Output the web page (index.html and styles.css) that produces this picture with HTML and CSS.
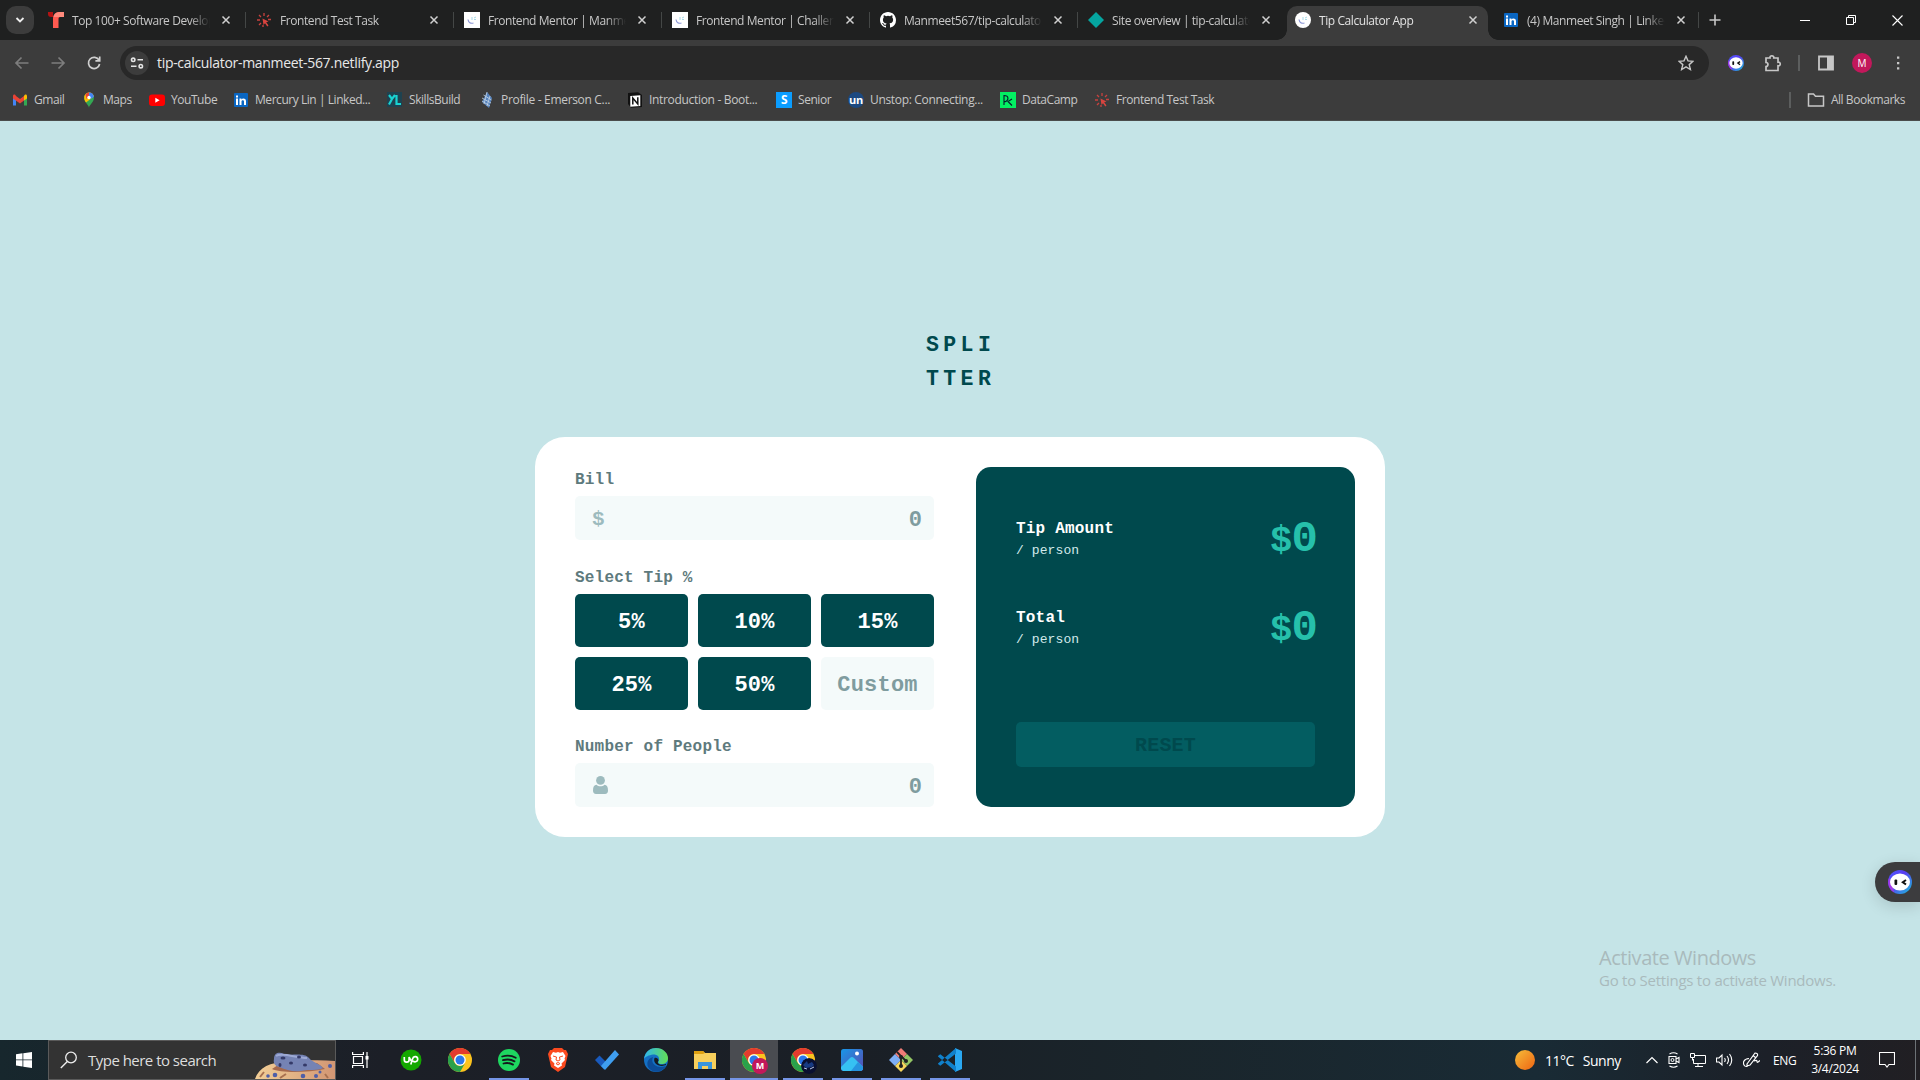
FILE: index.html
```html
<!DOCTYPE html>
<html lang="en">
<head>
<meta charset="utf-8">
<title>Tip Calculator App</title>
<link rel="stylesheet" href="styles.css">
</head>
<body>
<svg class="defs" width="0" height="0">
  <defs>
    <linearGradient id="ring" x1="0" y1="0" x2="1" y2="1"><stop offset="0" stop-color="#4b5cff"/><stop offset=".4" stop-color="#5a3df2"/><stop offset="1" stop-color="#18c4dc"/></linearGradient>
    <linearGradient id="sun" x1="0" y1="0" x2="1" y2="1"><stop offset="0" stop-color="#f6bd3a"/><stop offset="1" stop-color="#ee6412"/></linearGradient>
    <linearGradient id="edgeA" x1="0" y1="0" x2="1" y2="0"><stop offset="0" stop-color="#2fb6ee"/><stop offset="1" stop-color="#63de54"/></linearGradient>
    <linearGradient id="photo" x1="0" y1="0" x2="1" y2="1"><stop offset="0" stop-color="#1797e8"/><stop offset="1" stop-color="#5b4bb0"/></linearGradient>
    <linearGradient id="dough" x1="0" y1="0" x2="1" y2="0"><stop offset="0" stop-color="#f2cf97"/><stop offset="1" stop-color="#d29673"/></linearGradient>
    <symbol id="close" viewBox="0 0 16 16"><path d="M4.500 4.500l7 7M11.500 4.500l-7 7" stroke="currentColor" stroke-width="1.500" fill="none"/></symbol>
    <symbol id="burst" viewBox="0 0 16 16"><path d="M8 1v3M3 3l2 2M13 3l-2 2M1 8h3M12 7.500h3M3 13l2-2M7 13v2" stroke="#c9413e" stroke-width="1.300" fill="none"/><path d="M6.500 6.500l6 3-2.300.8 2.300 3.200-1.200.9-2.300-3.200-1.500 1.800z" fill="#d9443f"/></symbol>
    <symbol id="fm" viewBox="0 0 16 16"><path d="M4 7.500c.5 3 2.500 4.300 5.500 3.500" stroke="#8d97d6" stroke-width="1.200" fill="none"/><path d="M8 5v3M10 6l2-1M10 7.500h2" stroke="#a9dbe8" stroke-width="1" fill="none"/></symbol>
    <symbol id="linkedin" viewBox="0 0 16 16"><rect x="1" y="1" width="14" height="14" rx="1" fill="#0a66c2"/><path d="M3 6.500h2V13H3zM3 3.500h2v2H3zM6.500 6.500h1.900v.9c1-1.500 4.600-1.400 4.600 1.700V13h-2V9.600c0-1.900-2.500-1.800-2.500 0V13h-2z" fill="#fff"/></symbol>
    <symbol id="bot" viewBox="0 0 24 24"><circle cx="12" cy="12" r="12" fill="url(#ring)"/><path d="M1 8A12 12 0 0 0 6 22.500L4 12z" fill="#a238e8"/><ellipse cx="12" cy="12" rx="10" ry="8.600" fill="#fff"/><rect x="6.500" y="9.500" width="2.700" height="5.500" rx="1" fill="#111"/><path d="M18 10l-3.200 2.200L18 14.500" stroke="#111" stroke-width="2" fill="none"/></symbol>
    <symbol id="chrome" viewBox="0 0 24 24"><circle cx="12" cy="12" r="12" fill="#fcc31e"/><path d="M1.600 6A12 12 0 0 1 22.400 6H12a6 6 0 0 0-5.200 9z" fill="#e33b2e"/><path d="M1.600 6A12 12 0 0 0 12 24l5.200-9A6 6 0 0 1 6.800 15z" fill="#2aa14b"/><circle cx="12" cy="12" r="5.800" fill="#fff"/><circle cx="12" cy="12" r="4.500" fill="#2b78ea"/></symbol>
  </defs>
</svg>

<div class="browser">
  <div class="tabs">
    <div class="tab-search"><svg width="12" height="12" viewBox="0 0 12 12"><path d="M2.500 4L6 7.500 9.500 4" stroke="#eee" stroke-width="1.800" fill="none"/></svg></div>
    <div class="tab"><svg class="ico" viewBox="0 0 16 16"><path d="M0 0h5v5H3a3 3 0 0 1-3-3z" fill="#b31313"/><path d="M5 6a6 6 0 0 1 6-6h5v5h-4q-1.500 0-1.500 1.500V16H5z" fill="#ff5a50"/><path d="M5.500 5a6 6 0 0 1 5.500-5h5v5z" fill="#ff8a7c"/></svg><span class="title">Top 100+ Software Developer</span><svg class="x"><use href="#close"/></svg></div>
    <div class="tab"><svg class="ico"><use href="#burst"/></svg><span class="title">Frontend Test Task</span><svg class="x"><use href="#close"/></svg></div>
    <div class="tab"><svg class="ico white"><use href="#fm"/></svg><span class="title">Frontend Mentor | Manmeet</span><svg class="x"><use href="#close"/></svg></div>
    <div class="tab"><svg class="ico white"><use href="#fm"/></svg><span class="title">Frontend Mentor | Challenges</span><svg class="x"><use href="#close"/></svg></div>
    <div class="tab"><svg class="ico" viewBox="0 0 16 16"><path fill="#fff" d="M8 0C3.580 0 0 3.580 0 8c0 3.540 2.290 6.530 5.470 7.590.4.070.55-.17.55-.38 0-.19-.01-.82-.01-1.490-2.010.37-2.530-.49-2.690-.94-.09-.23-.48-.94-.82-1.130-.28-.15-.68-.52-.01-.53.63-.01 1.080.58 1.230.82.72 1.210 1.870.87 2.330.66.07-.52.28-.87.51-1.070-1.780-.2-3.640-.89-3.640-3.950 0-.87.31-1.590.82-2.150-.08-.2-.36-1.020.08-2.120 0 0 .67-.21 2.200.82a7.600 7.600 0 0 1 4 0c1.530-1.040 2.200-.82 2.200-.82.44 1.100.16 1.920.08 2.120.51.56.82 1.270.82 2.150 0 3.070-1.870 3.750-3.650 3.950.29.25.54.73.54 1.480 0 1.070-.01 1.930-.01 2.200 0 .21.15.46.55.38A8 8 0 0 0 16 8c0-4.420-3.580-8-8-8z"/></svg><span class="title">Manmeet567/tip-calculator</span><svg class="x"><use href="#close"/></svg></div>
    <div class="tab last-before"><svg class="ico" viewBox="0 0 16 16"><path d="M8 0l8 8-8 8-8-8z" fill="#05a5a0"/></svg><span class="title">Site overview | tip-calculator</span><svg class="x"><use href="#close"/></svg></div>
    <div class="tab active"><svg class="ico white round"><use href="#fm"/></svg><span class="title">Tip Calculator App</span><svg class="x"><use href="#close"/></svg></div>
    <div class="tab after"><svg class="ico"><use href="#linkedin"/></svg><span class="title">(4) Manmeet Singh | LinkedIn</span><svg class="x"><use href="#close"/></svg></div>
    <svg class="plus" width="12" height="12" viewBox="0 0 12 12"><path d="M6 .5v11M.5 6h11" stroke="#c7c7c7" stroke-width="1.600"/></svg>
    <div class="win">
      <svg width="10" height="10"><path d="M0 5.500h10" stroke="#fff"/></svg>
      <svg width="10" height="10"><path d="M.5 2.500h7v7h-7zM2.500 2.500v-2h7v7h-2" stroke="#fff" fill="none"/></svg>
      <svg width="11" height="11"><path d="M.5.5l10 10M10.500.5l-10 10" stroke="#fff" stroke-width="1.100"/></svg>
    </div>
  </div>

  <div class="toolbar">
    <svg class="nav dim" viewBox="0 0 16 16"><path d="M14.500 8H2.500M7.500 2.500L2 8l5.500 5.500"/></svg>
    <svg class="nav dim" viewBox="0 0 16 16"><path d="M1.500 8h12M8.500 2.500L14 8l-5.500 5.500"/></svg>
    <svg class="nav" viewBox="0 0 16 16"><path d="M13 5.200A5.600 5.600 0 1 0 13.600 9M13.700 1.500v4.300H9.400"/></svg>
    <div class="omnibox">
      <span class="site"><svg width="14" height="12" viewBox="0 0 14 12"><g stroke="#e3e3e3" stroke-width="1.600" fill="none"><circle cx="3.200" cy="2.800" r="1.700"/><path d="M7.500 2.800H13M1 9.200h5.500"/><circle cx="10.800" cy="9.200" r="1.700"/></g></svg></span>
      <span class="url">tip-calculator-manmeet-567.netlify.app</span>
      <svg class="star" width="16" height="16" viewBox="0 0 16 16"><path d="M8 1.300l2 4.600 5 .4-3.800 3.300 1.200 4.900L8 11.900l-4.400 2.600 1.200-4.900L1 6.300l5-.4z" stroke="#c7c7c7" stroke-width="1.400" fill="none"/></svg>
    </div>
    <svg class="i16" viewBox="0 0 24 24"><use href="#bot"/></svg>
    <svg class="i18" viewBox="0 0 18 18"><path d="M2 4h4c-.6-3 4.300-3 3.800 0H14v4.200c3-.5 3 4 0 3.600V16.500H2v-4c2.600 0 2.600-4 0-4z" stroke="#c7c7c7" stroke-width="1.700" fill="none"/></svg>
    <i class="vsep"></i>
    <svg class="i16" viewBox="0 0 16 16"><path d="M1 1.500h14v13H1z" stroke="#c7c7c7" stroke-width="1.800" fill="none"/><path d="M9 1.500h6v13H9z" fill="#c7c7c7"/></svg>
    <span class="avatar">M</span>
    <svg class="i16" viewBox="0 0 16 16"><path d="M7 1.500h2.300v2.300H7zM7 6.900h2.300v2.300H7zM7 12.300h2.300v2.300H7z" fill="#c7c7c7"/></svg>
  </div>

  <div class="bookmarks">
    <div class="bm"><svg viewBox="0 0 16 16"><path d="M1 3.500v10h3V8z" fill="#4285f4"/><path d="M15 3.500v10h-3V8z" fill="#34a853"/><path d="M12 4v4.500l3-2V4.200c0-1.700-1.800-2.400-3-.2z" fill="#fbbc04"/><path d="M1 4.200v2.300l7 5 4-3V4L8 7 4 4C2.800 1.800 1 2.500 1 4.200z" fill="#ea4335"/></svg><span>Gmail</span></div>
    <div class="bm"><svg viewBox="0 0 16 16"><path d="M8 16c0-3-4.800-5.500-4.800-10.200A4.900 4.900 0 0 1 8 .5a4.900 4.900 0 0 1 4.900 5.300C12.900 10.500 8 13 8 16z" fill="#34a853"/><path d="M3.200 6A4.900 4.900 0 0 1 8 .5c3 0 4.600 2 4.800 4L5 10.500C4 9 3.200 7.800 3.200 6z" fill="#fbbc04"/><path d="M4.500 2.200A5 5 0 0 1 11 1.500L5.500 7z" fill="#ea4335"/><path d="M8 .5c3 0 4.800 2 4.900 4.500L9.500 7 8 5z" fill="#4285f4"/><circle cx="8" cy="5.500" r="1.700" fill="#fff"/></svg><span>Maps</span></div>
    <div class="bm"><svg viewBox="0 0 16 16"><rect y="2.500" width="16" height="11.500" rx="3" fill="#f00"/><path d="M6.300 5.700v5l4.300-2.500z" fill="#fff"/></svg><span>YouTube</span></div>
    <div class="bm"><svg viewBox="0 0 16 16"><use href="#linkedin"/></svg><span>Mercury Lin | Linked...</span></div>
    <div class="bm"><svg viewBox="0 0 16 16"><rect y="0" width="15" height="15" fill="#1e4250"/><path d="M2 3l3 4 3-4M5 7l-3 5.500M9.500 3v9H14" stroke="#19d3d2" stroke-width="2.200" fill="none"/></svg><span>SkillsBuild</span></div>
    <div class="bm wide"><svg viewBox="0 0 16 16"><path d="M8 0l5 6-3 10-7-6z" fill="#5683bd"/><path d="M3 6l9 5M4.500 3l8 5M3 9l8 5M8 0L5 12M11 4L8 14" stroke="#c7d5e4" stroke-width=".8"/></svg><span>Profile - Emerson C...</span></div>
    <div class="bm wide"><svg viewBox="0 0 16 16"><path d="M1 1l10-.8L15 3v12l-11 .8L1 12z" fill="#111"/><path d="M3.300 4l10-.7v10.800l-10 .6z" fill="#fff"/><path d="M5.800 12.500V6l5 6V5.200" stroke="#111" stroke-width="1.500" fill="none"/></svg><span>Introduction - Boot...</span></div>
    <div class="bm"><b class="sq blue">S</b><span>Senior</span></div>
    <div class="bm wide"><b class="sq navy">un</b><span>Unstop: Connecting...</span></div>
    <div class="bm"><svg viewBox="0 0 16 16"><rect width="16" height="16" fill="#03ef62"/><path d="M4 13V3.500c5 0 5.500 5 0 6.500M12 7L8 9.500l4 4" stroke="#05192d" stroke-width="1.100" fill="none"/></svg><span>DataCamp</span></div>
    <div class="bm"><svg viewBox="0 0 16 16"><use href="#burst"/></svg><span>Frontend Test Task</span></div>
    <div class="all"><svg width="18" height="16" viewBox="0 0 18 16"><path d="M1.500 2h5l2 2.300h8V14h-15z" stroke="#c7c7c7" stroke-width="1.500" fill="none"/></svg><span>All Bookmarks</span></div>
  </div>
</div>

<main class="page">
  <h1 class="logo">SPLI<br>TTER</h1>
  <section class="card">
    <form class="form">
      <label class="label">Bill</label>
      <div class="field"><span class="dollar">$</span><span>0</span></div>
      <label class="label tip">Select Tip %</label>
      <div class="grid">
        <div class="btn">5%</div><div class="btn">10%</div><div class="btn">15%</div>
        <div class="btn">25%</div><div class="btn">50%</div><div class="btn custom">Custom</div>
      </div>
      <label class="label people">Number of People</label>
      <div class="field"><svg class="person" width="15" height="18" viewBox="0 0 15 18"><circle cx="7.500" cy="4.400" r="4.400" fill="#9dbbbe"/><path d="M3.500 8.800c2 2 6 2 8 0 2.300 0 3.500 2.200 3.500 5.700 0 2-1 3.500-3 3.500H3c-2 0-3-1.500-3-3.500 0-3.500 1.200-5.700 3.500-5.700z" fill="#9dbbbe"/></svg><span>0</span></div>
    </form>
    <div class="panel">
      <div class="row"><div><div class="name">Tip Amount</div><div class="per">/ person</div></div><div class="amount"><i>$</i>0</div></div>
      <div class="row"><div><div class="name">Total</div><div class="per">/ person</div></div><div class="amount"><i>$</i>0</div></div>
      <div class="reset">RESET</div>
    </div>
  </section>
  <div class="float"><svg width="24" height="24"><use href="#bot"/></svg></div>
  <div class="activate"><div class="a1">Activate Windows</div><div class="a2">Go to Settings to activate Windows.</div></div>
</main>

<footer class="taskbar">
  <div class="start"><svg width="16" height="16" viewBox="0 0 16 16"><path d="M0 2.200l6.500-.9v6.200H0zM7.300 1.200L16 0v7.500H7.300zM0 8.300h6.500v6.200L0 13.600zM7.300 8.300H16V16l-8.700-1.300z" fill="#fff"/></svg></div>
  <div class="search">
    <svg width="18" height="18" viewBox="0 0 18 18"><circle cx="11" cy="6.500" r="5.300" stroke="#eee" stroke-width="1.300" fill="none"/><path d="M7.300 10.500L.8 17" stroke="#eee" stroke-width="1.400"/></svg>
    <span>Type here to search</span>
    <svg class="cookie" width="80" height="38" viewBox="0 0 80 38"><path d="M0 38C4 25 18 20 36 21c15-2 30-2 44-1v18z" fill="url(#dough)"/><path d="M17 28c8 4 35 4 53 0l-8-6H26z" fill="#a5694e"/><path d="M19 18c0-7 6-7 10-5 8 2 20-2 25 4 4 5 12 6 14 10-6 3-13 1-22 3-9 1-14-1-22-4-4-1-6-4-5-8z" fill="#7583b4"/><path d="M21 15c6-4 20 2 31 2" stroke="#9da9d4" stroke-width="2" fill="none"/><g fill="#343a68"><ellipse cx="28" cy="17" rx="2.500" ry="1.500"/><ellipse cx="36" cy="22" rx="2" ry="1.500"/><ellipse cx="44" cy="16" rx="2" ry="1.500"/><ellipse cx="50" cy="24" rx="2" ry="1.500"/><ellipse cx="25" cy="24" rx="1.500" ry="2"/></g><g fill="#4e5fa8"><circle cx="13" cy="35" r="1.800"/><circle cx="20" cy="34" r="2.300"/><circle cx="48" cy="35" r="2.300"/><circle cx="61" cy="35" r="2"/><circle cx="65" cy="31" r="1.500"/><circle cx="75" cy="25" r="2"/></g><path d="M5 36l4-5M25 37l6-4M70 33l3 4" stroke="#a87150" stroke-width="2"/></svg>
  </div>
  <div class="apps">
    <div class="app view"><svg width="17" height="16" viewBox="0 0 17 16"><path d="M.6 0v2.500h10.800V0M.6 16v-2.500h10.800V16M1.500 4.500h9v7h-9z" stroke="#fff" stroke-width="1.200" fill="none"/><path d="M15 0v16" stroke="#fff" stroke-width="1.200"/><path d="M13.500 4h3v3.500h-3z" fill="#fff"/></svg></div>
    <div class="app"><svg width="22" height="22" viewBox="0 0 22 22"><circle cx="11" cy="11" r="10.500" fill="#14a800"/><path d="M4.300 8v2.700c0 3.300 4.800 3.300 4.800 0V8c1 2.500 2 4 3.400 4.700M10.800 15.500l1.700-5.600c1-3.500 5.200-2.500 5.200.3 0 2.300-2.600 3.400-4.800 1.800" stroke="#fff" stroke-width="1.700" fill="none"/></svg></div>
    <div class="app"><svg width="24" height="24"><use href="#chrome"/></svg></div>
    <div class="app run"><svg width="22" height="22" viewBox="0 0 22 22"><circle cx="11" cy="11" r="11" fill="#1ed760"/><path d="M4.200 7.500c5-1.400 9.500-1 13.500 1.200M5 11.200c4-1.200 8-.8 11.500 1.200M5.500 14.500c3.500-1 6.500-.6 9.500 1.100" stroke="#15181c" stroke-width="1.800" stroke-linecap="round" fill="none"/></svg></div>
    <div class="app"><svg width="20" height="24" viewBox="0 0 20 24"><path d="M6 0h8l2 2h2l2 4-3 13-7 5-7-5L0 6l2-4h2z" fill="#fb4a1f"/><path d="M5 4l3 .8L10 4l2 .8 3-.8 2.500 4-1 2.500.5 1.500-3.500 3.500.5 2L10 20l-4-2.500.5-2L3 12l.5-1.500-1-2.500z" fill="#fff"/><path d="M5 8l3.500 1L8 12l2 1 2-1-.5-3L15 8M8 15.500l2-1 2 1-2 1.500z" stroke="#fb4a1f" stroke-width="1" fill="none"/></svg></div>
    <div class="app"><svg width="24" height="20" viewBox="0 0 24 20"><path d="M0 10l4.500-4.500 8 8L9 19.500z" fill="#195abd"/><path d="M6 16L20 0l4 4.500L10 20z" fill="#3f9ef0"/></svg></div>
    <div class="app"><svg width="24" height="24" viewBox="0 0 24 24"><circle cx="12" cy="12" r="12" fill="#1470c4"/><path d="M0 11C1 3 7 0 12 0c7 0 12 5 12 10 0 4-3 6-6.500 6-3 0-4-1.500-2.500-3.500C16 8 12 6 9 6.500 5 7 1 9 0 11z" fill="url(#edgeA)"/><path d="M9 9c-3 7 4 12 13 9-4 7-14 8-18 1-2-5 1-9 5-10z" fill="#0c4c98"/><path d="M10.500 10c-1.500 4 2 8 7.500 8l4-1v-1c-5 2-10 0-7.500-3.500 0-2-2.500-3.500-4-2.500z" fill="#151b21"/></svg></div>
    <div class="app run"><svg width="22" height="18" viewBox="0 0 22 18"><path d="M0 0h9l2 2h11v16H0z" fill="#f8cf5c"/><path d="M0 0h9l2 2-2 1H0z" fill="#dfa011"/><path d="M4 18v-7h14v7h-4v-3H8v3z" fill="#3a94dc"/></svg></div>
    <div class="app run on"><svg width="24" height="24"><use href="#chrome"/></svg><b class="badge">M</b></div>
    <div class="app run"><svg width="24" height="24"><use href="#chrome"/></svg><svg class="badge night" viewBox="0 0 16 16"><circle cx="8" cy="8" r="8" fill="#0a1030"/><path d="M2 7l4-4 1 3 4-2 2 3-2 2-6 1z" fill="#183b83"/><path d="M3 10l3 1M9 11l4-2" stroke="#b7c7ee"/></svg></div>
    <div class="app run"><svg width="22" height="22" viewBox="0 0 22 22"><rect width="22" height="22" rx="2.500" fill="url(#photo)"/><path d="M0 18L9 9q2-2 4 0l9 9v2l-2 2H2l-2-2z" fill="#36c1f2"/><path d="M10 22l7-9 5 5v2l-2 2z" fill="#2694df"/><circle cx="16" cy="4.500" r="2" fill="#fff"/></svg></div>
    <div class="app run"><svg width="24" height="24" viewBox="0 0 24 24"><path d="M12 0l6 6-6 6-6-6z" fill="#f07c76"/><path d="M6 6l6 6-6 6-6-6z" fill="#7eaef5"/><path d="M18 6l6 6-6 6-6-6z" fill="#93c665"/><path d="M12 12l6 6-6 6-6-6z" fill="#f7d65c"/><path d="M8 4l4 4v11M12 8l5 5" stroke="#222" stroke-width="1.800" fill="none"/><g fill="#222"><circle cx="12" cy="9" r="2"/><circle cx="17" cy="13" r="2"/><circle cx="12" cy="18" r="2"/></g></svg></div>
    <div class="app run"><svg width="24" height="24" viewBox="0 0 24 24"><path d="M17 0l7 3v18l-7 3z" fill="#2aa8f2"/><path d="M0 8l2.300-1.700L18 18.500V24L0 8.500zM0 16l2.300 1.700L18 5.500V0L0 15.500z" fill="#1081cc"/></svg></div>
  </div>
  <div class="tray">
    <svg class="sun" width="20" height="20"><circle cx="10" cy="10" r="10" fill="url(#sun)"/></svg>
    <span class="weather"><span>11°C</span><span>Sunny</span></span>
    <svg width="12" height="8" viewBox="0 0 12 8"><path d="M.5 7L6 1.500 11.500 7" stroke="#fff" stroke-width="1.200" fill="none"/></svg>
    <svg width="12" height="16" viewBox="0 0 12 16"><path d="M1 4.500h7v7H1zM8 7l3-1.500v5L8 9M1.500 2q4-2.500 8 0M1.500 14q4 2.500 8 0" stroke="#fff" stroke-width="1.100" fill="none"/><circle cx="4.500" cy="8" r="1.500" stroke="#fff" fill="none"/></svg>
    <svg width="16" height="14" viewBox="0 0 16 14"><path d="M5 2.500h10.500v8H3.500V6M8 10.500V13M5 13.500h8M.5.5h4v4h-4zM2.500 4.500v3" stroke="#fff" fill="none"/></svg>
    <svg width="17" height="14" viewBox="0 0 17 14"><path d="M.5 5v4h2.500l3 3V2L3 5zM8.500 5q1.500 2 0 4M11 3q3 4 0 8M13.500 1q4.500 6 0 12" stroke="#fff" stroke-width="1.100" fill="none"/></svg>
    <svg width="17" height="16" viewBox="0 0 17 16"><path d="M4 12L12 1q3 0 2.500 2.500L7 13l-3 1zM6 6.500C0 7 0 11 1 13s4 2 4 0M11 9q3-1.500 3 .5t3-1M10 3.500l2.500 2" stroke="#fff" stroke-width="1.200" fill="none"/></svg>
    <span class="eng">ENG</span>
    <span class="clock"><span>5:36 PM</span><span>3/4/2024</span></span>
    <svg width="16" height="16" viewBox="0 0 16 16"><path d="M.5.5h15v12H10L8 15l-2-2.500H.5z" stroke="#fff" stroke-width="1.100" fill="none"/></svg>
    <i class="peek"></i>
  </div>
</footer>
</body>
</html>
```
FILE: styles.css
```css
* { box-sizing: border-box; }
body { margin: 0; width: 1920px; height: 1080px; overflow: hidden; display: flex; flex-direction: column; font-family: "Open Sans", "Noto Sans", sans-serif; background: #c5e4e7; }
.defs { position: absolute; }
svg { display: block; flex: none; }

/* Browser frame */
.browser { height: 121px; flex: none; background: #3c3c3c; color: #c7c7c7; font-size: 12px; border-bottom: 1px solid #4a4c4c; }
.tabs { height: 40px; background: #1f2020; display: flex; align-items: center; padding-left: 6px; }
.tab-search { width: 28px; height: 28px; border-radius: 10px; background: #3c3c3c; display: grid; place-items: center; margin-right: 4px; }
.tab { width: 208px; height: 16px; flex: none; padding-left: 10px; display: flex; align-items: center; border-right: 1px solid #444746; }
.tab .ico { width: 16px; height: 16px; margin-right: 8px; }
.white { background: #fff; }
.round { border-radius: 50%; }
.title { width: 140px; margin-right: 6px; overflow: hidden; white-space: nowrap; letter-spacing: -.42px; line-height: 18px; padding-top: 2px; mask-image: linear-gradient(90deg, #000 118px, transparent 138px); }
.x { width: 16px; height: 16px; color: #d0d0d0; }
.tab.last-before { border: 0; }
.tab.active { height: 34px; align-self: flex-end; padding: 0 0 6px 8px; background: #3c3c3c; border: 0; border-radius: 10px 10px 0 0; width: 201px; margin: 0 5px 0 1px; color: #e3e3e3; position: relative; }
.tab.active::before, .tab.active::after { content: ""; position: absolute; bottom: 0; width: 10px; height: 10px; }
.tab.active::before { left: -10px; background: radial-gradient(circle at 0 0, transparent 9.500px, #3c3c3c 10px); }
.tab.active::after { right: -10px; background: radial-gradient(circle at 100% 0, transparent 9.500px, #3c3c3c 10px); }
.tab.after { width: 206px; }
.plus { margin-left: 10px; }
.win { margin-left: auto; display: flex; align-items: center; gap: 36px; padding-right: 17px; }

.toolbar { height: 46px; padding-left: 14px; display: flex; align-items: center; }
.nav { width: 16px; height: 16px; margin-right: 20px; fill: none; stroke: #d0d0d0; stroke-width: 1.700; }
.nav.dim { stroke: #7d7d7d; }
.omnibox { width: 1589px; height: 34px; flex: none; margin: 0 19px 0 -2px; border-radius: 17px; background: #282828; display: flex; align-items: center; padding: 0 15px 0 5px; }
.site { width: 24px; height: 24px; border-radius: 50%; background: #3c3c3c; display: grid; place-items: center; margin-right: 8px; }
.url { font-size: 14px; letter-spacing: -.31px; color: #e8e8e8; line-height: 20px; }
.star { margin-left: auto; }
.i16 { width: 16px; height: 16px; }
.i18 { width: 18px; height: 18px; margin-left: 20px; }
.vsep { width: 2px; height: 16px; background: #5c5e5e; margin: 0 18px 0 16px; }
.avatar { width: 20px; height: 20px; flex: none; border-radius: 50%; background: #c2185b; color: #fff; font-size: 10px; line-height: 20px; text-align: center; margin: 0 18px; }

.bookmarks { height: 28px; display: flex; align-items: center; padding-left: 12px; letter-spacing: -.45px; white-space: nowrap; }
.bm { display: flex; align-items: center; gap: 6px; flex: none; line-height: 18px; }
.bm.wide { letter-spacing: -.32px; }
.bm svg { width: 16px; height: 16px; }
.bm:nth-child(1) { width: 69px; }
.bm:nth-child(2) { width: 68px; }
.bm:nth-child(3) { width: 84px; }
.bm:nth-child(4) { width: 154px; }
.bm:nth-child(5) { width: 92px; }
.bm:nth-child(6) { width: 148px; }
.bm:nth-child(7) { width: 149px; }
.bm:nth-child(8) { width: 72px; }
.bm:nth-child(9) { width: 152px; }
.bm:nth-child(10) { width: 94px; }
.sq { width: 16px; height: 16px; line-height: 15px; text-align: center; color: #fff; font-size: 12px; }
.blue { background: #0b9dff; }
.navy { background: #1c4980; border-radius: 50%; font-size: 11px; }
.all { margin-left: auto; margin-right: 15px; display: flex; align-items: center; gap: 6px; padding-left: 16px; border-left: 2px solid #5c5e5e; line-height: 16px; }

/* Calculator */
.page { flex: 1; position: relative; display: flex; flex-direction: column; align-items: center; font-family: "Liberation Mono", monospace; font-weight: 700; }
.logo { margin: 207px 0 0; font-size: 21.500px; line-height: 34px; letter-spacing: 4.400px; color: #00494d; width: 68px; }
.card { margin-top: 41px; width: 850px; height: 400px; padding: 30px 30px 30px 40px; border-radius: 30px; background: #fff; display: flex; justify-content: space-between; }
.form { width: 359px; }
.label { display: block; font-size: 16px; letter-spacing: .2px; line-height: 27px; color: #5e7a7d; margin-bottom: 2px; }
.field { height: 44px; border-radius: 5px; background: #f4fafa; color: #7f9c9f; font-size: 22px; display: flex; justify-content: space-between; align-items: center; padding: 4px 12px 0 18px; }
.dollar { color: #9dbbbe; font-size: 21px; margin: 0 0 2px -1px; }
.person { margin-bottom: 4px; }
.label.tip { margin-top: 25px; }
.label.people { margin-top: 24px; }
.grid { display: grid; grid-template-columns: repeat(3, 113px); grid-auto-rows: 53px; gap: 10px; }
.btn { border-radius: 5px; background: #00494d; color: #fff; font-size: 22px; letter-spacing: .2px; line-height: 57px; text-align: center; }
.custom { background: #f4fafa; color: #7f9c9f; }
.panel { width: 379px; height: 340px; border-radius: 15px; background: #00494d; padding: 51px 40px 40px; display: flex; flex-direction: column; }
.row { height: 89px; display: flex; justify-content: space-between; color: #fff; }
.name { font-size: 16px; letter-spacing: .2px; line-height: 22px; }
.per { font-size: 13px; letter-spacing: .1px; line-height: 21px; font-weight: 400; color: #d3e9eb; }
.amount { color: #26c0ab; font-size: 44px; line-height: 43px; letter-spacing: -2px; padding-right: 0; margin-right: -1px; }
.amount i { font-style: normal; font-size: 37px; letter-spacing: -.5px; }
.reset { margin-top: auto; height: 45px; border-radius: 5px; background: #035d61; color: #00494d; font-size: 20px; line-height: 47px; letter-spacing: .2px; text-align: center; }
.float { position: absolute; right: 0; top: 741px; width: 45px; height: 40px; border-radius: 20px 0 0 20px; background: #3c3c3e; display: flex; align-items: center; padding-left: 13px; box-shadow: 0 4px 16px rgba(0, 0, 0, .14); }
.activate { position: absolute; left: 1599px; top: 823px; font: 400 20px/28px "Open Sans", sans-serif; color: #a9babc; white-space: nowrap; }
.a1 { letter-spacing: -.45px; }
.a2 { font-size: 15px; line-height: 16px; letter-spacing: -.25px; }

/* Taskbar */
.taskbar { height: 40px; flex: none; background: linear-gradient(90deg, #17272d, #1c1f27 20%, #1a1f26 45%, #1a252b 60%, #192b35 80%, #1c2028 92%, #211f23); color: #fff; display: flex; }
.start { width: 48px; display: grid; place-items: center; }
.search { width: 288px; border: 1px solid #5a5a5a; background: #333; display: flex; align-items: center; padding-left: 11px; font-size: 15px; letter-spacing: -.52px; color: #dedede; }
.search span { margin-left: 10px; flex: 1; white-space: nowrap; }
.cookie { align-self: flex-end; }
.apps { display: flex; }
.app { width: 48px; margin-right: 1px; display: grid; place-items: center; position: relative; }
.app.view { margin-right: 3px; }
.run::after { content: ""; position: absolute; left: 4px; right: 4px; bottom: 0; height: 2px; background: #7595e6; }
.on { background: #4a4c51; }
.on::after { left: 0; right: 0; }
.badge { position: absolute; left: 22px; top: 18px; width: 16px; height: 16px; border-radius: 50%; background: #c2185b; font-size: 9px; line-height: 16px; text-align: center; }
.night { background: none; }
.tray { margin-left: auto; display: flex; align-items: center; }
.weather { display: flex; gap: 9px; width: 101px; margin-left: 10px; font-size: 14px; letter-spacing: -.5px; }
.tray svg + svg { margin-left: 10px; }
.eng { font-size: 12px; letter-spacing: -.3px; margin-left: 13px; width: 24px; }
.clock { width: 64px; margin: 0 12px 0 6px; font-size: 12px; letter-spacing: -.3px; line-height: 18px; display: flex; flex-direction: column; align-items: center; }
.peek { width: 1px; height: 40px; background: #6d7276; margin: 0 4px 0 20px; }
```
